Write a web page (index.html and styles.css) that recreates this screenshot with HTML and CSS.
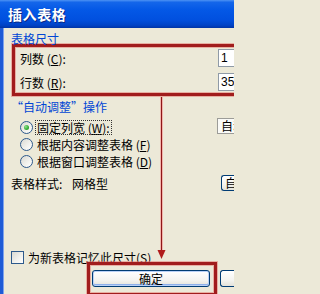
FILE: index.html
```html
<!DOCTYPE html>
<html lang="zh-CN">
<head>
<meta charset="utf-8">
<title>插入表格</title>
<link rel="stylesheet" href="styles.css">
</head>
<body>
<div class="win">
  <div class="titlebar"><span class="title">插入表格</span></div>
  <div class="client">
    <div class="legend legend-size">表格尺寸</div>
    <div class="hl hl-size">
      <div class="row"><span class="lbl">列数 (<u>C</u>):</span><span class="field">1</span></div>
      <div class="row"><span class="lbl">行数 (<u>R</u>):</span><span class="field">35</span></div>
    </div>
    <div class="legend legend-fit">“自动调整”操作</div>
    <div class="opts">
      <div class="radios">
        <div class="opt"><span class="radio checked"></span><span class="otext focus">固定列宽 (<u>W</u>):</span></div>
        <div class="opt"><span class="radio"></span><span class="otext">根据内容调整表格 (<u>F</u>)</span></div>
        <div class="opt"><span class="radio"></span><span class="otext">根据窗口调整表格 (<u>D</u>)</span></div>
      </div>
      <div class="combo">自动</div>
    </div>
    <div class="style-row">
      <span class="slbl">表格样式:</span><span class="sval">网格型</span>
      <span class="btn btn-auto">自动套用</span>
    </div>
    <div class="check-row"><span class="check"></span><span class="ctext">为新表格记忆此尺寸(<u>S</u>)</span></div>
    <div class="btn-row">
      <div class="hl hl-ok"><span class="btn btn-ok">确定</span></div>
      <span class="btn btn-cancel">取消</span>
    </div>
  </div>
  <svg class="arrow" width="14" height="166" viewBox="0 0 14 166">
    <line x1="6.5" y1="1" x2="6.5" y2="156" stroke="#f2b4ac" stroke-width="3"/>
    <line x1="6.5" y1="1" x2="6.5" y2="156" stroke="#8e1717" stroke-width="1"/>
    <polygon points="2.5,154 10.5,154 6.5,163" fill="#b01c1c"/>
  </svg>
</div>
</body>
</html>
```

FILE: styles.css
```css
html, body {
  margin: 0;
  padding: 0;
  background: #ECE9D8;
  overflow: hidden;
}

.win {
  position: relative;
  width: 234px;
  height: 294px;
  overflow: hidden;
  font-family: "Noto Sans CJK SC", "Noto Sans", sans-serif;
  font-size: 12px;
  color: #000;
}

.titlebar {
  height: 28px;
  box-sizing: border-box;
  padding: 6px 0 0 8px;
  background: linear-gradient(to bottom, #4d93f4 0%, #1466ea 8%, #0458e6 35%, #0150df 70%, #0043c6 90%, #0034a6 100%);
}

.title {
  display: block;
  color: #fff;
  font-weight: bold;
  font-size: 14px;
  line-height: 16px;
  letter-spacing: 0.6px;
  text-shadow: 1px 1px 0 #0a2a86;
}

.client {
  height: 266px;
  box-sizing: border-box;
  border-left: 3px solid #1f5bd6;
  box-shadow: inset 1px 0 0 #7fa3ec;
  padding-left: 8px;
  overflow: hidden;
}

.legend {
  color: #0046D5;
  white-space: nowrap;
}

.legend-size {
  margin-top: 5px;
  height: 12px;
  line-height: 12px;
}

.hl {
  border: 3px solid #A11D1D;
  box-shadow: 0 0 0 1px rgba(228, 120, 110, 0.5), inset 0 0 0 1px rgba(228, 120, 110, 0.5);
}

.hl-size {
  margin-top: -1px;
  margin-left: 1px;
  width: 216px;
  border-right: 0;
  padding: 2px 0 2px 5px;
  display: flex;
  flex-direction: column;
  gap: 6px;
  overflow: hidden;
}

.row {
  display: flex;
  align-items: center;
  height: 18px;
  white-space: nowrap;
}

.lbl {
  width: 198px;
  flex: none;
}

.field {
  flex: none;
  box-sizing: border-box;
  width: 30px;
  height: 18px;
  line-height: 16px;
  padding-left: 2px;
  background: #fff;
  border: 1px solid #8f9aa6;
  border-right: 0;
  font-family: "Liberation Sans", sans-serif;
}

.legend-fit {
  margin-top: 4px;
  height: 13px;
  line-height: 13px;
}

.opts {
  margin-top: 6px;
  padding-left: 9px;
  display: flex;
  align-items: flex-start;
}

.radios {
  width: 197px;
  flex: none;
}

.opt {
  height: 17px;
  display: flex;
  align-items: center;
  white-space: nowrap;
}

.radio {
  position: relative;
  flex: none;
  box-sizing: border-box;
  width: 13px;
  height: 13px;
  border-radius: 50%;
  border: 1px solid #2d5a8c;
  background: linear-gradient(135deg, #d9d9d2 0%, #f2f2ee 60%, #ffffff 100%);
  margin-right: 1px;
}

.radio.checked::after {
  content: "";
  position: absolute;
  left: 3px;
  top: 3px;
  width: 5px;
  height: 5px;
  border-radius: 50%;
  background: radial-gradient(circle at 35% 35%, #8ee08e 0%, #3ab03a 55%, #1b8a1b 100%);
}

.otext {
  box-sizing: border-box;
  height: 15px;
  line-height: 15px;
  padding: 0 2px;
  margin-left: 1px;
}

.otext.focus {
  outline: 1px dotted #333;
  outline-offset: -1px;
}

.combo {
  flex: none;
  box-sizing: border-box;
  margin-top: -1px;
  width: 17px;
  height: 16px;
  line-height: 14px;
  padding-left: 3px;
  background: #fafaf7;
  border: 1px solid #9c9c98;
  border-right: 0;
  white-space: nowrap;
  overflow: hidden;
}

.style-row {
  margin-top: 5px;
  height: 16px;
  display: flex;
  align-items: center;
  white-space: nowrap;
}

.slbl {
  width: 61px;
  flex: none;
}

.sval {
  width: 149px;
  flex: none;
}

.btn {
  box-sizing: border-box;
  display: inline-block;
  border: 1px solid #003C74;
  border-radius: 3px;
  background: linear-gradient(to bottom, #ffffff 0%, #f4f4f0 60%, #e3e2da 100%);
  text-align: center;
  white-space: nowrap;
  overflow: hidden;
}

.btn-auto {
  flex: none;
  width: 13px;
  height: 16px;
  line-height: 14px;
  text-align: left;
  padding-left: 3px;
  border-right: 0;
  border-radius: 3px 0 0 3px;
}

.check-row {
  margin-top: 60px;
  height: 13px;
  display: flex;
  align-items: center;
  white-space: nowrap;
}

.check {
  flex: none;
  box-sizing: border-box;
  width: 13px;
  height: 13px;
  border: 1px solid #2d5a8c;
  background: linear-gradient(135deg, #d9d9d2 0%, #f2f2ee 60%, #ffffff 100%);
  margin-right: 4px;
}

.ctext {
  line-height: 13px;
}

.btn-row {
  margin-top: -2px;
  margin-left: 76px;
  display: flex;
  align-items: flex-start;
}

.hl-ok {
  flex: none;
  padding: 5px 4px 6px 2px;
}

.btn-ok {
  display: block;
  width: 118px;
  height: 17px;
  line-height: 15px;
  box-shadow: inset 0 0 0 1px #b9d1f7, inset 0 -1px 0 1px #8eb0ea;
}

.btn-cancel {
  flex: none;
  margin-top: 8px;
  margin-left: 3px;
  width: 14px;
  height: 17px;
  line-height: 15px;
  border-right: 0;
  border-radius: 3px 0 0 3px;
  color: transparent;
}

.arrow {
  position: absolute;
  left: 155px;
  top: 96px;
}
```
